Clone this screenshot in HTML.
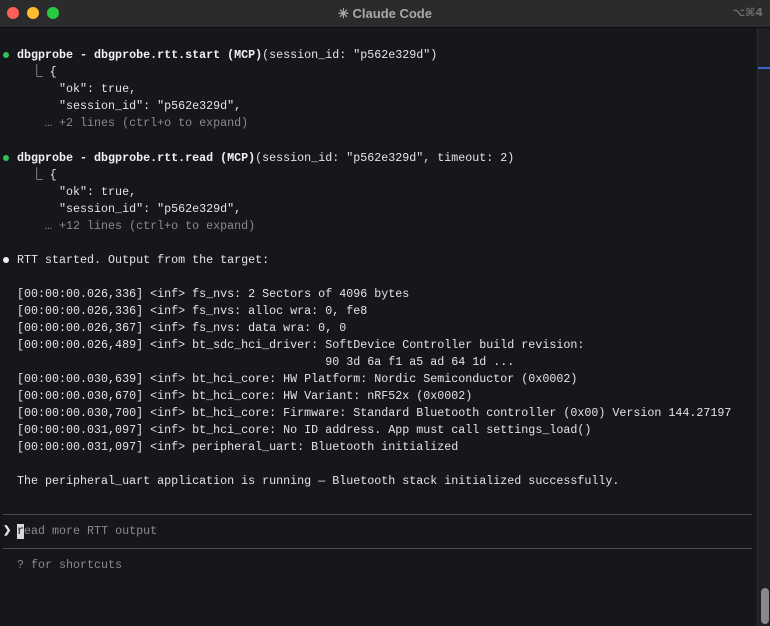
<!DOCTYPE html>
<html><head><meta charset="utf-8"><style>
html,body{margin:0;padding:0;width:770px;height:626px;overflow:hidden;background:#16171b;}
#tb{position:absolute;left:0;top:0;width:770px;height:27px;background:#2b2b2d;border-bottom:1px solid #0c0c0e;}
.dot{position:absolute;top:7px;width:12px;height:12px;border-radius:50%;}
#title{position:absolute;left:0;width:770px;top:6px;text-align:center;color:#a9a9ab;font:bold 13px "Liberation Sans",sans-serif;}
#sc{position:absolute;right:7px;top:6px;color:#6e6e70;font:bold 11px "DejaVu Sans",sans-serif;}
.l{position:absolute;left:17px;font-family:"Liberation Mono",monospace;font-size:11.68px;line-height:17px;color:#e4e4e4;white-space:pre;}
.g{color:#8a8a8e}
.b{font-weight:bold;color:#f2f2f2}
.bul{position:absolute;left:3px;width:6px;height:6px;border-radius:50%;}
.hr{position:absolute;left:3px;width:749px;height:1px;background:#4a4a4e;}
#track{position:absolute;left:757px;top:28px;width:13px;height:598px;background:#1f2024;border-left:1px solid #2c2d31;}
#thumb{position:absolute;left:761px;top:588px;width:8px;height:36px;border-radius:4px;background:#88898d;}
</style></head><body>
<div id="tb">
<div class="dot" style="left:7px;background:#fe5f57"></div>
<div class="dot" style="left:27px;background:#febc2e"></div>
<div class="dot" style="left:47px;background:#28c840"></div>
<div id="title">✳ Claude Code</div>
<div id="sc">⌥⌘4</div>
</div>
<div id="track"></div>
<div style="position:absolute;left:758px;top:67px;width:12px;height:2px;background:#3a64c8"></div>
<div id="thumb"></div>

<div class="bul" style="top:52px;background:#2fc25b"></div>
<div class="l" style="top:47px"><span class="b">dbgprobe - dbgprobe.rtt.start (MCP)</span>(session_id: "p562e329d")</div>
<div class="l" style="top:64px">  ⎿ {</div>
<div class="l" style="top:81px">      "ok": true,</div>
<div class="l" style="top:98px">      "session_id": "p562e329d",</div>
<div class="l g" style="top:115px">    … +2 lines (ctrl+o to expand)</div>

<div class="bul" style="top:155px;background:#2fc25b"></div>
<div class="l" style="top:150px"><span class="b">dbgprobe - dbgprobe.rtt.read (MCP)</span>(session_id: "p562e329d", timeout: 2)</div>
<div class="l" style="top:167px">  ⎿ {</div>
<div class="l" style="top:184px">      "ok": true,</div>
<div class="l" style="top:201px">      "session_id": "p562e329d",</div>
<div class="l g" style="top:218px">    … +12 lines (ctrl+o to expand)</div>

<div class="bul" style="top:257px;background:#f0f0f0"></div>
<div class="l" style="top:252px">RTT started. Output from the target:</div>

<div class="l" style="top:286px">[00:00:00.026,336] &lt;inf&gt; fs_nvs: 2 Sectors of 4096 bytes
[00:00:00.026,336] &lt;inf&gt; fs_nvs: alloc wra: 0, fe8
[00:00:00.026,367] &lt;inf&gt; fs_nvs: data wra: 0, 0
[00:00:00.026,489] &lt;inf&gt; bt_sdc_hci_driver: SoftDevice Controller build revision:
                                            90 3d 6a f1 a5 ad 64 1d ...
[00:00:00.030,639] &lt;inf&gt; bt_hci_core: HW Platform: Nordic Semiconductor (0x0002)
[00:00:00.030,670] &lt;inf&gt; bt_hci_core: HW Variant: nRF52x (0x0002)
[00:00:00.030,700] &lt;inf&gt; bt_hci_core: Firmware: Standard Bluetooth controller (0x00) Version 144.27197
[00:00:00.031,097] &lt;inf&gt; bt_hci_core: No ID address. App must call settings_load()
[00:00:00.031,097] &lt;inf&gt; peripheral_uart: Bluetooth initialized</div>

<div class="l" style="top:473px">The peripheral_uart application is running — Bluetooth stack initialized successfully.</div>

<div class="hr" style="top:514px"></div>
<div class="l" style="left:3px;top:523px;font-weight:bold;font-size:10px">❯</div>
<div style="position:absolute;left:17px;top:524px;width:7px;height:15px;background:#d8d8d8"></div>
<div class="l g" style="top:523px"><span style="color:#16171b">r</span>ead more RTT output</div>
<div class="hr" style="top:548px"></div>
<div class="l g" style="top:557px">? for shortcuts</div>
</body></html>
